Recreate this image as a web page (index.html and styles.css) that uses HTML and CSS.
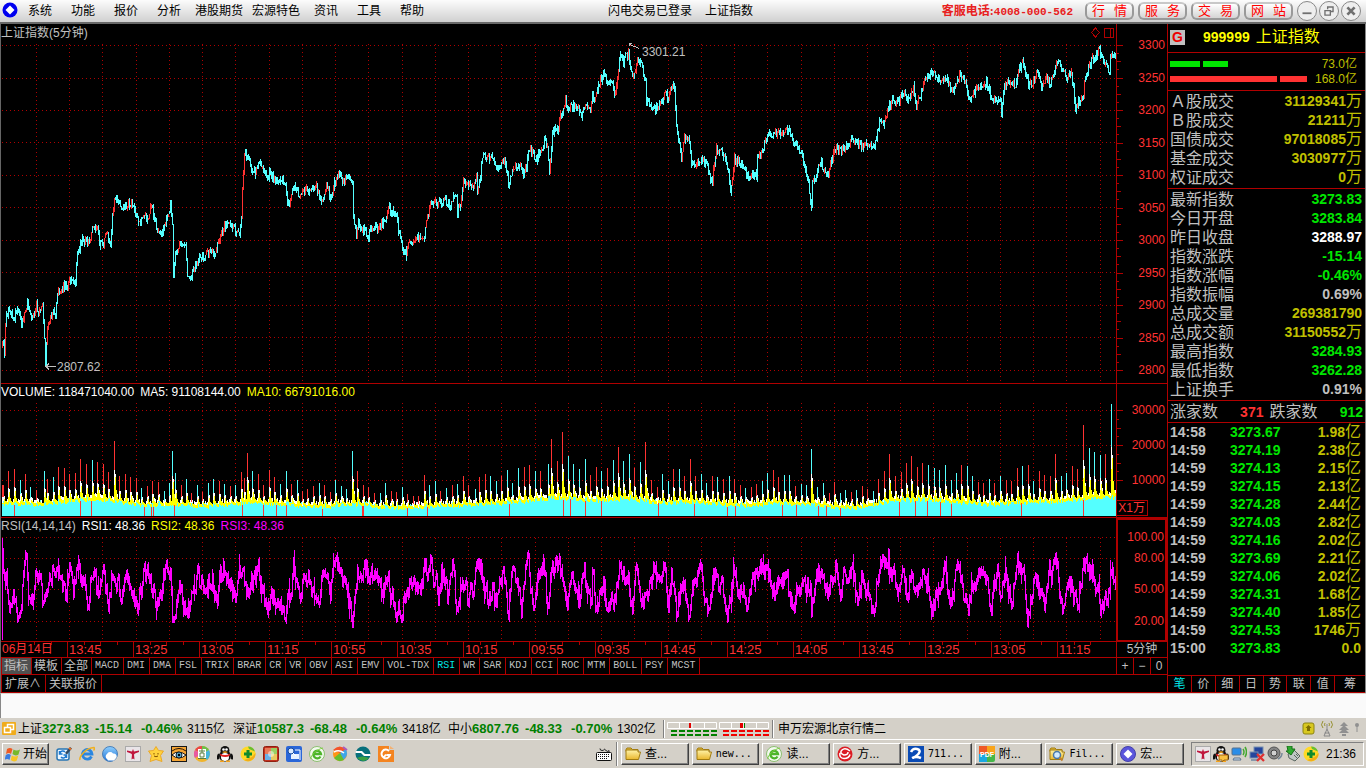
FILE: index.html
```html
<!DOCTYPE html>
<html lang="zh-CN">
<head>
<meta charset="utf-8">
<title>上证指数</title>
<link rel="stylesheet" href="styles.css">
</head>
<body>
<svg class="defs" aria-hidden="true">
  <defs>
    <linearGradient id="gBlue" x1="0" y1="0" x2="0" y2="1"><stop offset="0" stop-color="#8fd0ff"/><stop offset="1" stop-color="#1c6fd6"/></linearGradient>
    <linearGradient id="gGold" x1="0" y1="0" x2="0" y2="1"><stop offset="0" stop-color="#fff3a8"/><stop offset="1" stop-color="#e9b72e"/></linearGradient>
  </defs>
  <symbol id="i-folder" viewBox="0 0 16 16"><path d="M1 3.500l1-1.500h4l1.500 1.500H13v2H1z" fill="#e3b93a" stroke="#a27c10"/><path d="M1 13V4h12v2h2.500L13.500 13.500H1z" fill="url(#gGold)" stroke="#a27c10"/></symbol>
  <symbol id="i-search" viewBox="0 0 16 16"><use href="#i-folder"/><circle cx="8" cy="9" r="3.500" fill="#cfe9ff" stroke="#4878a8" stroke-width="1.500"/><path d="M10.500 11.500l3 3" stroke="#c08030" stroke-width="2"/></symbol>
  <symbol id="i-note" viewBox="0 0 16 16"><rect x="1" y="3" width="12" height="11" rx="2" fill="#eef7ff" stroke="#2876b4" stroke-width="1.500"/><path d="M4 7a3 3 0 0 1 5-1M10 10a3 3 0 0 1-5 1M3.500 5v3h3M10.500 12V9h-3" fill="none" stroke="#1c78d0" stroke-width="1.500"/><path d="M9 7l5-6 2 1.500-5 6z" fill="#304860"/><path d="M13 2l2 1.500" stroke="#f07020" stroke-width="2"/></symbol>
  <symbol id="i-ie" viewBox="0 0 16 16"><path d="M12.500 10.500A4.800 4.800 0 1 1 13 8H4" fill="none" stroke="#2a86e0" stroke-width="2.800"/><path d="M1 14C0 10 7 2 15 1.500c1 1 .5 2-.5 3" fill="none" stroke="#f0b020" stroke-width="1.500"/></symbol>
  <symbol id="i-ie-green" viewBox="0 0 16 16"><circle cx="8" cy="8" r="7.500" fill="#f3faee" stroke="#8cbf70"/><path d="M11.500 10.500A3.800 3.800 0 1 1 12 8H5" fill="none" stroke="#4db52a" stroke-width="2.300"/><path d="M2 13C1 10 8 3 14 2" fill="none" stroke="#79cc3c"/></symbol>
  <symbol id="i-qb" viewBox="0 0 16 16"><circle cx="8" cy="8" r="7.500" fill="url(#gBlue)" stroke="#4c80b8"/><path d="M5 13a3 3 0 0 1 0-5 3.500 3.500 0 0 1 6-.5 3 3 0 0 1 3.500 4l-2.500 3H6z" fill="#fff"/></symbol>
  <symbol id="i-swift" viewBox="0 0 16 16"><rect x=".5" y=".5" width="15" height="15" fill="#e9e5e8" stroke="#aaa"/><path d="M2 4.500l5 1 1-2.500 1 2.500 5-1v1.500l-4 1.500-1 1 .5 5-1.500-1-1.500 1 .5-5-1-1-4-1.500z" fill="#c0143c"/></symbol>
  <symbol id="i-star" viewBox="0 0 16 16"><path d="M8 .5l2.500 4 5 .5-3 4.500 1.500 6-6-2-6 2 1.500-6-3-4.500 5-.5z" fill="#ffd23c" stroke="#eaa82a" stroke-linejoin="round"/><path d="M6 7v1.500M10 7v1.500M6 10q2 1.500 4 0" stroke="#805000" fill="none"/></symbol>
  <symbol id="i-eye" viewBox="0 0 16 16"><rect x=".5" y=".5" width="15" height="15" fill="#f5a534" stroke="#181818"/><path d="M1 9q6-6 14 0-7 6-14 0z" fill="#fff" stroke="#111"/><circle cx="8" cy="9" r="3" fill="#58a8cc" stroke="#123"/><circle cx="8" cy="9" r="1.200"/><path d="M1 5q7-5 14 0" fill="none" stroke="#201000"/></symbol>
  <symbol id="i-book" viewBox="0 0 16 16"><circle cx="8" cy="8" r="8" fill="#f0b42c"/><path d="M8 8L1 4a8 8 0 0 1 7-4z" fill="#e94848"/><path d="M8 8V0a8 8 0 0 1 7 4z" fill="#6cc04a"/><path d="M8 8l7-4a8 8 0 0 1-2 10z" fill="#44b4dd"/><path d="M8 8L1 12a8 8 0 0 1 0-8z" fill="#e85aa0"/><rect x="4" y="3" width="8" height="10" fill="#fff"/><path d="M5 5h6M6 7h4v4H6zM8 3v4M4 12.500h8" stroke="#5a8040" fill="none"/></symbol>
  <symbol id="i-qq" viewBox="0 0 16 16"><path d="M2 8q-3 6 0 4M14 8q3 6 0 4" stroke="#111" stroke-width="2"/><ellipse cx="8" cy="10" rx="6" ry="5.500" fill="#111"/><ellipse cx="8" cy="4.500" rx="4.500" ry="4.500" fill="#111"/><ellipse cx="8" cy="11" rx="4" ry="4" fill="#fff"/><path d="M3 7.500q5 3 10 0l-.5 2.500q-4 2-9 0z" fill="#e32222"/><circle cx="6.500" cy="3.500" r="1.300" fill="#fff"/><circle cx="9.500" cy="3.500" r="1.300" fill="#fff"/><path d="M5 6q3-1.500 6 0-3 2-6 0zM3 14.500h4v1.500H3zM9 14.500h4v1.500H9z" fill="#f6a31a"/></symbol>
  <symbol id="i-qq-chat" viewBox="0 0 16 16"><use href="#i-qq"/><path d="M6 9h9v5h-4l-2 2v-2H6z" fill="#f8c040" stroke="#a06810"/></symbol>
  <symbol id="i-plus" viewBox="0 0 16 16"><circle cx="8" cy="8" r="7.500" fill="#ffd926"/><path d="M15.500 7A7.500 7.500 0 0 1 4 14l8-3z" fill="#f2ae18"/><path d="M8 .5a7.500 7.500 0 0 1 7 5L9 3z" fill="#68bf30"/><path d="M8 4v8M4 8h8" stroke="#108a2c" stroke-width="3"/></symbol>
  <symbol id="i-quad" viewBox="0 0 16 16"><rect x=".5" y=".5" width="15" height="15" rx="2" fill="#c33220" stroke="#902010"/><rect x="2" y="2" width="6" height="6" fill="#e87a5a"/><rect x="8" y="2" width="6" height="6" fill="#99d064"/><rect x="2" y="8" width="6" height="6" fill="#6ab0e8"/><rect x="8" y="8" width="6" height="6" fill="#e8cb60"/><circle cx="8" cy="8" r="3" fill="#fff" opacity=".5"/></symbol>
  <symbol id="i-doc" viewBox="0 0 16 16"><rect x="0" y="0" width="16" height="16" rx="2" fill="#2a66d8"/><rect x="5" y="8" width="8" height="5" fill="#e8f1ff"/><circle cx="5" cy="5" r="3" fill="#dceaff" stroke="#174a9c"/><path d="M7 7l3 3M9 4h5v10" stroke="#fff" fill="none"/></symbol>
  <symbol id="i-ball" viewBox="0 0 16 16"><circle cx="8" cy="8" r="7" fill="#ff9416"/><path d="M1 4Q8-3 14 4L8 7z" fill="#f3542c"/><path d="M14 3q3 7-3 11L8 7z" fill="#3fa5e8"/><path d="M2 12q4 5 10 2L8 7z" fill="#66bf2d"/><path d="M2 6q5-3 10 1" stroke="#fff" fill="none" stroke-width="1.500"/><path d="M11 1l4 3" stroke="#a85cc0" stroke-width="2"/></symbol>
  <symbol id="i-wave" viewBox="0 0 16 16"><circle cx="8" cy="8" r="7.500" fill="#08707c"/><path d="M1 5h6l3 3h5.500v2H9L6 7H.5z" fill="#fff"/><path d="M2 12q5-3 12 0-5 6-12 0z" fill="#3aa043"/></symbol>
  <symbol id="i-g" viewBox="0 0 16 16"><path d="M0 0h11v4h5v12H0z" fill="#f48420"/><path d="M12 0l4 3h-4z" fill="#f4b070"/><path d="M11 5a4.300 4.300 0 1 0 1 4H8.500M8 8.500L6 11" fill="none" stroke="#fff" stroke-width="2"/></symbol>
  <symbol id="i-swirl" viewBox="0 0 16 16"><circle cx="8" cy="8" r="7.500" fill="#dc1c24"/><path d="M13 5Q8 1 5 4t2 5q4 0 4-3M3 7q-1 5 4 5.500 5 0 6-4" fill="none" stroke="#fff" stroke-width="1.500"/></symbol>
  <symbol id="i-z" viewBox="0 0 16 16"><rect width="16" height="16" fill="#0a4bb5"/><path d="M3 6q2-4 6-3t2 4q-1 2-6 5M4 12q4-2 9 0" fill="none" stroke="#fff" stroke-width="2.500"/></symbol>
  <symbol id="i-hy" viewBox="0 0 16 16"><circle cx="8" cy="8" r="7.500" fill="#5a55dc" stroke="#4340a8"/><path d="M8 3.500L12.500 8 8 12.500 3.500 8z" fill="#fff"/></symbol>
  <symbol id="i-pc" viewBox="0 0 16 16"><rect x="1" y="2" width="9" height="7" rx="1" fill="#2a8de8" stroke="#58708c"/><path d="M3 12h6l1 2H2z" fill="#cfe0f0" stroke="#5d7490"/><path d="M12 3q2 3 0 6M14 1q3 5 0 10" fill="none" stroke="#44a830" stroke-width="1.500"/></symbol>
  <symbol id="i-net" viewBox="0 0 16 16"><rect x="5" y="1" width="9" height="7" fill="#25459c" stroke="#7890b0"/><rect x="1" y="6" width="8" height="6" fill="#25459c" stroke="#7890b0"/><path d="M2 14h7" stroke="#8698ac" stroke-width="2"/><path d="M8 8l7 7M15 8l-7 7" stroke="#e03030" stroke-width="2.300"/></symbol>
  <symbol id="i-vol" viewBox="0 0 16 16"><circle cx="7" cy="7" r="6" fill="#858585" stroke="#555"/><circle cx="7" cy="7" r="3" fill="#d0d0d0" stroke="#444"/><path d="M11 13q4-2 4-6" fill="none" stroke="#789" stroke-width="1.500"/></symbol>
  <symbol id="i-usb" viewBox="0 0 16 16"><path d="M3 8l6-4 6 6-5 5-6-3z" fill="#bfc6c4" stroke="#58655e"/><path d="M2 0h5v3h3L6 9 1 5h2z" fill="#30aa30" stroke="#187018"/><path d="M9 9l3 3M11 8l2 2" stroke="#5b665e"/></symbol>
  <symbol id="i-keyboard" viewBox="0 0 16 13"><path d="M4 .5q0 2 2 2t2-1 2 1 3 0V4" fill="none" stroke="#222"/><rect x=".5" y="4.500" width="15" height="8" rx="1" fill="#fff" stroke="#111"/><path d="M2 6.500h12M2 8.500h12M4 10.500h8" stroke="#111" stroke-dasharray="1 1"/></symbol>
  <symbol id="i-win" viewBox="0 0 16 16"><path d="M2 3q3-2 5.500 0L6 8Q4 6 1 8z" fill="#ef5a24"/><path d="M8.500 3.500q3 2 6.500 0l-1.500 5q-3 2-6-.5z" fill="#76b82a"/><path d="M.8 9q3-2 5 0l-1.300 5Q2 12-.5 14z" fill="#3a7ce0"/><path d="M6.800 9.500q3 2 6.500 0l-1.500 5q-3 2-6-.5z" fill="#f8c522"/></symbol>
</svg>

<header class="menubar">
  <div class="menu-left">
    <svg class="logo" viewBox="0 0 16 16" aria-hidden="true"><circle cx="8" cy="8" r="7.500" fill="#0000f0"/><path d="M8 3.500l4.500 4.500L8 12.500 3.500 8z" fill="#fff"/></svg>
    <nav class="menu"><button>系统</button><button>功能</button><button>报价</button><button>分析</button><button>港股期货</button><button>宏源特色</button><button>资讯</button><button>工具</button><button>帮助</button></nav>
  </div>
  <div class="login"><span>闪电交易已登录</span><span>上证指数</span></div>
  <div class="menu-right">
    <span class="hotline">客服电话:<span>4008-000-562</span></span>
    <button class="pill"><span>行</span><span>情</span></button><button class="pill"><span>服</span><span>务</span></button><button class="pill"><span>交</span><span>易</span></button><button class="pill"><span>网</span><span>站</span></button>
    <div class="winbtns">
      <button aria-label="最小化"><svg viewBox="0 0 20 20"><path d="M5 12.500h10" stroke-width="2"/></svg></button>
      <button aria-label="还原"><svg viewBox="0 0 20 20"><path d="M8.500 8V5.500h6v5H12M5.500 9.500h6v5h-6z" stroke-width="1.500"/></svg></button>
      <button aria-label="关闭"><svg viewBox="0 0 20 20"><path d="M6 6l8 8M14 6l-8 8" stroke-width="3"/></svg></button>
    </div>
  </div>
</header>

<main class="workspace">
  <section class="charts">
    <div class="panel price">
      <div class="plot">
        <svg id="price" viewBox="1 24 1115 359" preserveAspectRatio="none"></svg>
        <div class="legend"><span class="c-gray">上证指数(5分钟)</span></div>
      </div>
      <ul class="axis axis-price"><li>3300</li><li>3250</li><li>3200</li><li>3150</li><li>3100</li><li>3050</li><li>3000</li><li>2950</li><li>2900</li><li>2850</li><li>2800</li></ul>
    </div>
    <div class="panel volume">
      <div class="plot">
        <svg id="volume" viewBox="1 384 1115 133" preserveAspectRatio="none"></svg>
        <div class="legend"><span class="c-white">VOLUME: 118471040.00</span><span class="c-white">MA5: 91108144.00</span><span class="c-bright">MA10: 66791016.00</span></div>
      </div>
      <ul class="axis axis-volume"><li>30000</li><li>20000</li><li>10000</li><li class="unit">X1万</li></ul>
    </div>
    <div class="panel rsi">
      <div class="plot">
        <svg id="rsi" viewBox="1 518 1115 123" preserveAspectRatio="none"></svg>
        <div class="legend"><span class="c-gray">RSI(14,14,14)</span><span class="c-white">RSI1: 48.36</span><span class="c-bright">RSI2: 48.36</span><span class="c-magenta">RSI3: 48.36</span></div>
      </div>
      <ul class="axis axis-rsi"><li>100.00</li><li>80.00</li><li>50.00</li><li>20.00</li></ul>
    </div>
    <div class="timeline">
      <ol class="times"><li>06月14日</li><li>13:45</li><li>13:25</li><li>13:05</li><li>11:15</li><li>10:55</li><li>10:35</li><li>10:15</li><li>09:55</li><li>09:35</li><li>14:45</li><li>14:25</li><li>14:05</li><li>13:45</li><li>13:25</li><li>13:05</li><li>11:15</li></ol>
      <span class="period">5分钟</span>
    </div>
    <div class="tabrow">
      <div class="tabs"><button class="cjk active">指标</button><button class="cjk">模板</button><button class="cjk">全部</button><button>MACD</button><button>DMI</button><button>DMA</button><button>FSL</button><button>TRIX</button><button>BRAR</button><button>CR</button><button>VR</button><button>OBV</button><button>ASI</button><button>EMV</button><button>VOL-TDX</button><button class="chosen">RSI</button><button>WR</button><button>SAR</button><button>KDJ</button><button>CCI</button><button>ROC</button><button>MTM</button><button>BOLL</button><button>PSY</button><button>MCST</button></div>
      <div class="zoomers"><button>+</button><button>−</button><button>0</button></div>
    </div>
    <div class="tabrow"><div class="tabs ext"><button>扩展∧</button><button>关联报价</button></div></div>
  </section>

  <aside class="quote">
    <div class="title"><b class="gbox">G</b><b class="code">999999</b><span>上证指数</span></div>
    <div class="flows">
      <div class="flow up"><i></i><i></i><span>73.0亿</span></div>
      <div class="flow down"><i></i><i></i><span>168.0亿</span></div>
    </div>
    <dl class="facts">
      <div><dt>Ａ股成交</dt><dd class="c-yellow">31129341<span>万</span></dd></div>
      <div><dt>Ｂ股成交</dt><dd class="c-yellow">21211<span>万</span></dd></div>
      <div><dt>国债成交</dt><dd class="c-yellow">97018085<span>万</span></dd></div>
      <div><dt>基金成交</dt><dd class="c-yellow">3030977<span>万</span></dd></div>
      <div><dt>权证成交</dt><dd class="c-yellow">0<span>万</span></dd></div>
    </dl>
    <dl class="facts">
      <div><dt>最新指数</dt><dd class="c-green">3273.83</dd></div>
      <div><dt>今日开盘</dt><dd class="c-green">3283.84</dd></div>
      <div><dt>昨日收盘</dt><dd class="c-white">3288.97</dd></div>
      <div><dt>指数涨跌</dt><dd class="c-green">-15.14</dd></div>
      <div><dt>指数涨幅</dt><dd class="c-green">-0.46%</dd></div>
      <div><dt>指数振幅</dt><dd class="c-gray">0.69%</dd></div>
      <div><dt>总成交量</dt><dd class="c-yellow">269381790</dd></div>
      <div><dt>总成交额</dt><dd class="c-yellow">31150552<span>万</span></dd></div>
      <div><dt>最高指数</dt><dd class="c-green">3284.93</dd></div>
      <div><dt>最低指数</dt><dd class="c-green">3262.28</dd></div>
      <div><dt>上证换手</dt><dd class="c-gray">0.91%</dd></div>
    </dl>
    <div class="breadth"><span>涨家数</span><b class="c-red">371</b><span>跌家数</span><b class="c-green">912</b></div>
    <table class="ticks">
      <tbody>
        <tr><td>14:58</td><td>3273.67</td><td>1.98<span>亿</span></td></tr>
        <tr><td>14:59</td><td>3274.19</td><td>2.38<span>亿</span></td></tr>
        <tr><td>14:59</td><td>3274.13</td><td>2.15<span>亿</span></td></tr>
        <tr><td>14:59</td><td>3274.15</td><td>2.13<span>亿</span></td></tr>
        <tr><td>14:59</td><td>3274.28</td><td>2.44<span>亿</span></td></tr>
        <tr><td>14:59</td><td>3274.03</td><td>2.82<span>亿</span></td></tr>
        <tr><td>14:59</td><td>3274.16</td><td>2.02<span>亿</span></td></tr>
        <tr><td>14:59</td><td>3273.69</td><td>2.21<span>亿</span></td></tr>
        <tr><td>14:59</td><td>3274.06</td><td>2.02<span>亿</span></td></tr>
        <tr><td>14:59</td><td>3274.31</td><td>1.68<span>亿</span></td></tr>
        <tr><td>14:59</td><td>3274.40</td><td>1.85<span>亿</span></td></tr>
        <tr><td>14:59</td><td>3274.53</td><td>1746<span>万</span></td></tr>
        <tr><td>15:00</td><td>3273.83</td><td>0.0</td></tr>
      </tbody>
    </table>
    <div class="side-tabs"><button class="chosen">笔</button><button>价</button><button>细</button><button>日</button><button>势</button><button>联</button><button>值</button><button>筹</button></div>
  </aside>
</main>

<div class="blank"></div>

<footer class="status">
  <svg class="stack" viewBox="0 0 14 13" aria-hidden="true"><rect width="14" height="13" rx="1" fill="#f0ac1c"/><path d="M5.500 5V2.500h6v5H9M2.500 5.500h6v5h-6z" fill="none" stroke="#fff" stroke-width="1.500"/></svg>
  <div class="idx"><span>上证</span><b class="last">3273.83</b><b>-15.14</b><b>-0.46%</b><span class="amt">3115亿</span></div>
  <div class="idx"><span>深证</span><b class="last">10587.3</b><b>-68.48</b><b>-0.64%</b><span class="amt">3418亿</span></div>
  <div class="idx"><span>中小</span><b class="last">6807.76</b><b>-48.33</b><b>-0.70%</b><span class="amt">1302亿</span></div>
  <i class="sep"></i>
  <svg class="meter" viewBox="0 0 103 14" aria-hidden="true">
    <path d="M.5.500h49v6H.5zM12.500 1v5M25 1v5M37.500 1v5M52.500.500h49v6h-49zM64.500 1v5M77 1v5M89.500 1v5" fill="none" stroke="#fff"/>
    <path d="M22 1h2v5h-2zM73 1h3v5h-3z" fill="#e00000"/><path d="M77 1h1v5h-1z" fill="#008000"/>
    <path d="M4 9h47M4 13h47" stroke="#008000" stroke-width="2" stroke-dasharray="6 2"/><path d="M56 9h47M56 13h47" stroke="#f00000" stroke-width="2" stroke-dasharray="6 2"/>
  </svg>
  <i class="sep"></i>
  <span class="server">申万宏源北京行情二</span>
  <svg class="signals" viewBox="0 0 58 18" aria-hidden="true">
    <rect x="1" y="3" width="11" height="11" rx="2" fill="#d8c820" stroke="#8c8410"/><path d="M6.500 5l3 3H8v3H5V8H3.500z" fill="#7c6c00"/>
    <path d="M21 1q-3 4 0 7M29 1q3 4 0 7M23 3q-1 2 0 3M27 3q1 2 0 3" fill="none" stroke="#969030"/><path d="M25 4v5l-3 7h6l-3-7M22.500 13h5" fill="none" stroke="#888"/>
    <path d="M42 2l4 4h-3l4 4h-3l3 3h-10l3-3h-3l4-4h-3zM40 14h4v2h-4z" fill="#909090"/><circle cx="55" cy="5" r="2" fill="#909090"/><path d="M55 6v6" stroke="#909090"/>
  </svg>
</footer>

<div class="taskbar">
  <button class="start"><svg><use href="#i-win"/></svg>开始</button>
  <div class="launch">
    <svg><use href="#i-note"/></svg><svg><use href="#i-ie"/></svg><svg><use href="#i-qb"/></svg><svg><use href="#i-swift"/></svg><svg><use href="#i-star"/></svg><svg><use href="#i-eye"/></svg><svg><use href="#i-book"/></svg><svg><use href="#i-qq"/></svg><svg><use href="#i-plus"/></svg><svg><use href="#i-quad"/></svg><svg><use href="#i-doc"/></svg><svg><use href="#i-ie-green"/></svg><svg><use href="#i-ball"/></svg><svg><use href="#i-wave"/></svg><svg><use href="#i-g"/></svg>
  </div>
  <svg class="keyboard"><use href="#i-keyboard"/></svg>
  <i class="sep light"></i>
  <div class="tasks">
    <button><svg><use href="#i-folder"/></svg>查...</button><button><svg><use href="#i-folder"/></svg><span class="mono">new...</span></button><button><svg><use href="#i-ie-green"/></svg>读...</button><button><svg><use href="#i-swirl"/></svg>方...</button><button><svg><use href="#i-z"/></svg><span class="mono">711...</span></button><button><svg viewBox="0 0 16 16"><rect width="16" height="16" rx="2" fill="#46b749"/><path d="M0 0h8v8H0z" fill="#ef5a28"/><path d="M8 0h8v8H8z" fill="#f9a51a"/><path d="M0 8h8v8H0z" fill="#1ba8e0"/><text class="pdf" x="8" y="11">PDF</text></svg>附...</button><button><svg><use href="#i-search"/></svg><span class="mono">Fil...</span></button><button><svg><use href="#i-hy"/></svg>宏...</button>
  </div>
  <div class="tray"><svg><use href="#i-swift"/></svg><svg><use href="#i-qq-chat"/></svg><svg><use href="#i-pc"/></svg><svg><use href="#i-net"/></svg><svg><use href="#i-vol"/></svg><svg><use href="#i-usb"/></svg><svg><use href="#i-plus"/></svg><time>21:36</time></div>
</div>
<script src="charts.js"></script>
</body>
</html>
```
FILE: styles.css
```css
:root {
  --line: #b00000;
  --red: #ff3232;
  --gray: #c0c0c0;
  --face: #d4d0c8;
  --sans: "Liberation Sans", "Noto Sans CJK SC", sans-serif;
}

* { box-sizing: border-box; }
body {
  margin: 0;
  min-height: 100vh;
  display: flex;
  flex-direction: column;
  background: #000;
  font: 12px/16px var(--sans);
  color: var(--gray);
}
button { font: inherit; color: inherit; background: none; border: 0; margin: 0; padding: 0; cursor: pointer; white-space: nowrap; }
ul, ol, dl, dd { margin: 0; padding: 0; list-style: none; }
.defs { position: absolute; width: 0; height: 0; }

.c-gray { color: #c0c0c0; }
.c-white { color: #fff; }
.c-bright { color: #ff0; }
.c-yellow { color: #c0c000; }
.c-green { color: #00e600; }
.c-red { color: #ff3232; }
.c-magenta { color: #f0f; }

/* menu bar */
.menubar {
  display: grid;
  grid-template-columns: 1fr auto 1fr;
  align-items: center;
  height: 24px;
  padding-right: 5px;
  color: #000;
  background: linear-gradient(#fcfcfc, #d0d0d0);
  border-bottom: 2px solid #686868;
}
.menu-left, .menu, .login, .menu-right, .winbtns { display: flex; align-items: center; }
.logo { width: 16px; height: 16px; margin: 0 1px 2px 2px; }
.menu button { min-width: 43px; padding: 0 5px 0 4px; }
.login { gap: 13px; }
.menu-right { justify-content: flex-end; gap: 4px; }
.hotline { margin-right: 8px; color: #e82020; font: bold 12px/16px "Liberation Serif", "Noto Sans CJK SC", serif; }
.hotline span { font: bold 11px/16px "Liberation Mono", monospace; }
.pill {
  display: flex;
  justify-content: space-between;
  width: 49px;
  height: 18px;
  padding: 0 5px;
  font-size: 13px;
  line-height: 14px;
  color: #f00;
  border: 2px solid #999;
  border-top-color: #c8c8c8;
  border-radius: 6px;
  background: linear-gradient(#fff, #d4d4d4);
}
.winbtns { gap: 2px; }
.winbtns button { width: 20px; height: 20px; border: 1px solid #888; border-radius: 10px; background: #eee; }
.winbtns svg { display: block; width: 18px; height: 18px; fill: none; stroke: #707070; }

/* workspace */
.workspace {
  flex: 1;
  display: grid;
  grid-template-columns: minmax(0, 1fr) 199px;
  border-left: 1px solid #666;
  background: #000;
}
.charts {
  display: grid;
  grid-template-rows: 360fr 134fr 124fr 16px 17px 18px;
}
.panel, .timeline { display: grid; grid-template-columns: minmax(0, 1fr) 51px; min-height: 0; border-bottom: 1px solid var(--line); }
.plot { display: grid; min-height: 0; min-width: 0; }
.plot > * { grid-area: 1 / 1; }
.plot svg { width: 100%; height: 100%; min-height: 0; overflow: visible; shape-rendering: crispEdges; }
.legend { display: flex; align-items: flex-start; gap: 6px; white-space: nowrap; }
.price .legend { padding-top: 1px; }
.axis { border-left: 1px solid var(--line); color: var(--red); text-align: right; }
.axis li { padding-right: 2px; line-height: 16px; }
.axis-price { display: flex; flex-direction: column; justify-content: space-between; padding: 13px 0 5px; }
.axis-volume { padding-top: 9px; }
.axis-volume li { line-height: 35px; }
.axis-volume .unit { width: 31px; margin-top: 2px; border: 1px solid var(--line); border-left: 0; line-height: 14px; }
.axis-rsi { display: flex; flex-direction: column; padding-top: 9px; border: 2px solid var(--line); border-bottom-width: 1px; }
.axis-rsi li { padding-right: 1px; }
.axis-rsi li:nth-child(2) { margin-top: 5px; }
.axis-rsi li:nth-child(3) { margin-top: 15px; }
.axis-rsi li:nth-child(4) { margin-top: 16px; }

.times { display: grid; grid-template-columns: 66fr repeat(15, minmax(0, 66fr)) minmax(0, 59fr); color: var(--red); line-height: 15px; font-size: 13px; }
.times li { padding-left: 1px; border-left: 1px solid var(--line); white-space: nowrap; }
.times li:first-child { border-left: 0; font-size: 12px; }
.period { border-left: 1px solid var(--line); text-align: center; line-height: 15px; }

.tabrow { display: flex; justify-content: space-between; border-bottom: 1px solid var(--line); }
.tabs, .zoomers { display: flex; }
.tabs { border-left: 1px solid var(--line); }
.tabs button { padding: 0 4px 0 3px; border-right: 1px solid var(--line); font: 10px/16px "Liberation Mono", monospace; }
.tabs .cjk { padding: 0 3px 0 2px; font: 12px/16px var(--sans); }
.ext button { font: 12px/16px var(--sans); }
.tabs .active { background: #505050; }
.tabs .chosen, .side-tabs .chosen { color: #00e6e6; }
.zoomers { width: 51px; border-left: 1px solid var(--line); }
.zoomers button { flex: 1; border-right: 1px solid var(--line); }
.zoomers button:last-child { border-right: 0; }

/* quote column */
.quote { display: flex; flex-direction: column; border-left: 1px solid var(--line); border-right: 1px solid #888; }
.title { display: flex; align-items: center; height: 29px; padding: 0 2px 2px; border-bottom: 1px solid var(--line); color: #ff0; font-size: 16px; }
.gbox { width: 15px; height: 15px; background: #c0c0c0; color: #e00; font: bold 14px/15px "Liberation Sans", sans-serif; text-align: center; }
.code { margin: 0 6px 0 18px; font-size: 14px; }
.flows { height: 38px; padding: 3px 8px 0 2px; border-bottom: 1px solid var(--line); color: #c0c000; }
.flow { display: flex; align-items: center; gap: 3px; height: 15px; }
.flow span { margin-left: auto; }
.flow i { height: 6px; background: #00e600; }
.up i:first-child { width: 30px; }
.up i + i { width: 25px; }
.down i { background: #ff3232; }
.down i:first-child { width: 107px; }
.down i + i { width: 27px; }
.facts { padding: 1px 3px 1px 2px; border-bottom: 1px solid var(--line); font-size: 16px; }
.facts div { display: flex; justify-content: space-between; height: 19px; line-height: 19px; }
.facts dd, .ticks { font-size: 14px; font-weight: bold; }
.facts dd span, .ticks span { font-size: 16px; font-weight: normal; line-height: 16px; }
.breadth { display: flex; justify-content: space-between; height: 22px; padding: 0 2px; border-bottom: 1px solid var(--line); font-size: 16px; line-height: 22px; }
.breadth b { font-size: 14px; }
.breadth .c-red { margin-left: 16px; }
.breadth .c-green { margin-left: 16px; }
.ticks { width: 100%; border-collapse: collapse; table-layout: fixed; }
.ticks td { height: 18px; padding: 0 2px; line-height: 18px; }
.ticks td:nth-child(1) { width: 58px; }
.ticks td:nth-child(2) { width: 64px; color: #00e600; padding-left: 4px; }
.ticks td:nth-child(3) { color: #c0c000; text-align: right; padding-right: 4px; }
.side-tabs { display: grid; grid-template-columns: repeat(7, 24fr) 30fr; height: 18px; margin-top: auto; border: solid var(--line); border-width: 1px 0; }
.side-tabs button { border-right: 1px solid var(--line); }
.side-tabs button:last-child { border-right: 0; }

/* lower bars */
.blank { height: 25px; background: #fafafa; border-top: 1px solid #d8d4cc; border-left: 1px solid #888; }
.status { display: flex; align-items: center; height: 21px; padding: 0 6px 0 2px; background: var(--face); color: #000; white-space: nowrap; }
.stack { width: 14px; height: 13px; margin-right: 2px; }
.idx { display: flex; }
.idx b { width: 46px; color: #008000; font: bold 13px/16px "Liberation Sans", sans-serif; }
.idx .last { width: 53px; }
.idx .amt { width: 46px; }
.sep { width: 2px; height: 18px; border-left: 1px solid #808080; border-right: 1px solid #fff; }
.meter { width: 103px; height: 14px; margin: 0 2px; }
.server { margin-left: 4px; }
.signals { width: 58px; height: 18px; margin-left: auto; }

.taskbar { display: flex; align-items: center; height: 29px; padding: 0 2px; background: var(--face); border-top: 1px solid #fff; color: #000; }
.taskbar svg { flex: none; width: 16px; height: 16px; }
.start, .tasks button {
  display: flex;
  align-items: center;
  height: 22px;
  border: 1px solid;
  border-color: #fff #404040 #404040 #fff;
  box-shadow: inset -1px -1px #808080;
  background: var(--face);
}
.start { width: 47px; padding-left: 2px; gap: 2px; }
.launch { display: flex; gap: 7px; margin-left: 7px; }
.taskbar .keyboard { height: 13px; margin: 0 4px 0 auto; }
.light { height: 24px; margin-right: 3px; }
.tasks { display: flex; gap: 3px; flex: 0 1 563px; }
.tasks button { flex: 1; gap: 4px; padding-left: 3px; }
.mono { font: 10px/16px "DejaVu Sans Mono", monospace; }
.pdf { font: bold 7px "Liberation Sans", sans-serif; fill: #fff; text-anchor: middle; }
.tray { display: flex; align-items: center; gap: 2px; height: 24px; margin-left: 7px; padding: 0 7px 0 3px; border: 1px solid; border-color: #808080 #fff #fff #808080; }
.tray time { margin-left: 5px; }
```
FILE: charts.js
```js
const CYAN = '#54ffff', RED = '#ff3232', LINE = '#b00000';

function random(seed) {
  return () => {
    seed = (seed * 1664525 + 1013904223) >>> 0;
    return seed / 4294967296;
  };
}

function pairs(text) {
  return text.trim().split(/\s+/).map(p => p.split(',').map(Number));
}

function at(points, x) {
  let i = 1;
  while (i < points.length - 1 && points[i][0] < x) i++;
  const [x0, y0] = points[i - 1], [x1, y1] = points[i];
  const t = Math.max(0, Math.min(1, (x - x0) / (x1 - x0)));
  return y0 + (y1 - y0) * t;
}

const bar = (x, top, bottom) =>
  `M${x} ${Math.round(top)}h1V${Math.max(Math.round(bottom), Math.round(top) + 1)}h-1z`;
const fill = (d, color) => `<path d="${d}" fill="${color}"/>`;

function grid(top, bottom, levels) {
  let d = '';
  for (const y of levels) for (let x = 2; x < 1116; x += 4) d += bar(x, y, y + 1);
  for (let k = 0; k < 33; k++) {
    const x = Math.round(36 + k * 33.24);
    for (let y = top; y < bottom; y += 4) d += bar(x, y, y + 1);
  }
  return fill(d, LINE);
}

function ticks(first, last, step) {
  let d = '', n = 0;
  for (let y = first; y <= last; y += step, n++) {
    const w = n % 4 === 0 ? 6 : n % 2 === 0 ? 4 : 2;
    d += `M1117 ${Math.round(y)}h${w}v1h-${w}z`;
  }
  return fill(d, LINE);
}

/* index price */
const price = pairs(`3,347 4,358 5,325 6,312 10,315 14,320 16,309 21,323 25,313 27,300 31,319 36,305 39,313 42,308
44,340 45,363 47,333 50,317 55,312 58,293 62,287 68,285 71,279 75,284 77,253 82,240 87,243 92,231 97,230 99,243
103,243 106,230 108,238 110,245 112,220 114,200 117,199 123,211 127,203 134,207 137,220 141,219 147,218 151,208
155,224 158,232 163,231 165,220 168,216 170,204 172,220 173,272 175,252 178,248 181,243 185,248 187,273 189,279
193,269 196,268 199,255 204,258 208,253 212,251 214,258 218,243 223,228 227,222 231,223 236,235 239,232 241,213
242,190 244,155 247,156 250,166 255,173 260,163 263,173 267,178 269,171 273,178 280,182 284,182 287,200 289,206
292,192 294,186 298,196 302,195 306,190 309,195 312,186 317,189 320,199 323,203 326,188 331,199 334,183 338,174
343,180 347,178 349,176 352,184 353,217 354,226 356,235 358,225 362,231 365,231 368,237 370,227 380,226 385,221
388,208 392,213 396,215 398,232 401,238 402,250 406,254 408,243 413,245 415,237 420,240 424,236 427,217 431,203
439,203 445,200 449,207 453,197 456,197 457,214 460,204 463,182 470,187 474,185 476,176 477,190 480,176 482,155
487,157 492,158 496,166 500,170 503,160 506,168 508,183 513,170 518,163 523,172 526,168 528,151 532,153 536,160
540,152 544,142 547,147 549,172 551,152 552,133 558,128 561,112 565,102 567,108 573,107 579,110 581,115 586,105
590,112 592,98 595,102 598,83 603,73 607,83 611,78 614,97 617,80 619,57 623,62 627,55 628,48 630,67 633,78
637,63 641,65 645,82 646,102 652,106 658,110 664,95 668,98 672,83 674,92 676,127 680,152 681,157 684,138 688,135
691,162 695,167 698,160 706,162 709,175 712,182 714,163 716,150 722,152 728,168 730,192 732,180 734,160 739,162
747,177 756,175 757,157 762,152 767,135 774,133 781,133 789,130 794,145 799,148 805,167 809,190 811,207 812,180
815,180 818,165 821,163 824,172 828,173 831,162 836,148 840,152 846,147 852,138 856,140 861,147 868,142 874,148
877,133 879,122 883,123 887,112 892,100 899,100 904,90 907,102 913,88 916,105 921,92 924,78 933,73 942,83 946,78
951,90 956,87 959,75 966,82 968,100 976,90 986,83 990,97 1000,102 1001,112 1003,92 1008,82 1015,85 1018,68
1023,63 1028,83 1032,85 1037,73 1042,87 1046,75 1049,88 1053,77 1056,60 1062,68 1066,78 1071,73 1075,107 1080,98
1083,100 1084,83 1087,72 1092,58 1099,52 1102,60 1106,62 1109,78 1110,57 1116,58`);

function drawPrice() {
  const rnd = random(7);
  let cyan = '', red = '', prev = at(price, 2);
  for (let x = 2; x < 1116; x++) {
    const cur = at(price, x) + (rnd() - 0.5) * 8;
    const top = Math.min(prev, cur) - rnd() * 4, bottom = Math.max(prev, cur) + rnd() * 4;
    if (cur < prev && rnd() > 0.5) red += bar(x, top, bottom - 1);
    else cyan += bar(x, top, bottom);
    prev = cur;
  }
  document.getElementById('price').innerHTML =
    grid(44, 382, [45, 78, 110, 142, 175, 207, 240, 272, 305, 337, 370]) + ticks(45, 371, 8.125) +
    fill(cyan, CYAN) + fill(red, RED) +
    `<path d="M45.500 366.500h10M49 363.500l-3 3 3 3M629 43.500h3M629.500 43v3M630 44.500l9 4" fill="none" stroke="#c0c0c0"/>
     <path d="M1095.500 28l4 4.500-4 4.500-4-4.500zM1104.500 28.500h9v9h-9zM1110.500 28v9" fill="none" stroke="${LINE}"/>
     <text x="57" y="371" fill="#c0c0c0">2807.62</text><text x="642" y="56" fill="#c0c0c0">3301.21</text>`;
}

/* turnover: opening spikes, negative where the bar closed lower */
const spikes = pairs(`3,31 8,45 14,47 20,-36 25,42 30,-29 36,26 44,-45 47,37 53,-39 58,49 64,48 69,42 75,43 80,57 86,52
92,-56 97,54 103,52 108,44 114,75 119,40 125,42 130,39 136,38 141,-28 147,30 152,35 158,34 164,-25 169,-33 172,-65
175,-43 181,31 186,-37 191,23 197,-31 202,24 208,-33 213,-37 219,35 224,-32 230,30 235,-31 241,44 244,38 247,63
252,-45 258,42 263,31 269,46 274,39 280,-32 286,-45 291,32 297,-36 302,25 307,27 313,30 319,-33 324,31 330,24
335,-36 341,-30 346,-27 352,-65 357,45 363,31 368,29 374,23 380,-23 385,-33 391,25 396,24 402,-29 407,22 413,20
418,20 424,41 429,-31 435,-35 440,25 446,-28 452,31 457,-32 463,40 468,31 475,-27 479,39 485,42 490,-40 496,-35
501,40 507,-46 512,-33 518,-48 524,49 529,51 535,-45 540,45 548,-52 551,77 557,55 562,84 568,-60 573,-52 579,-47
585,-57 590,41 596,49 601,-45 607,48 613,-56 618,69 623,-55 629,-62 634,48 640,-54 645,74 651,36 657,29 662,-42
668,-35 673,47 679,-47 684,40 690,57 695,40 701,-42 706,-33 712,40 717,-39 723,37 729,-40 734,37 740,31 745,-28
751,29 756,32 762,-35 767,-43 773,46 778,39 784,-41 789,-41 795,30 801,-32 806,-31 811,-67 817,-29 823,-33
829,23 834,34 840,-23 845,-26 851,24 856,-26 862,30 867,27 873,-25 878,37 884,45 889,62 895,40 901,44 906,53
911,60 917,49 922,53 928,-51 934,-48 939,-46 945,-51 951,-36 956,-43 961,51 967,-50 972,-40 978,34 983,33 989,-37
994,33 1000,-40 1006,36 1011,35 1017,48 1022,-50 1028,51 1033,-35 1039,45 1044,41 1050,40 1055,62 1061,-40
1066,-43 1072,50 1077,47 1083,91 1089,-68 1094,-64 1100,-61 1105,62 1111,-112`);

function drawVolume() {
  const rnd = random(19), base = 516;
  let cyan = '', red = '', white = '', yellow = '', deep = '';
  for (let x = 2; x < 1116; x++) {
    let sum = 0, n = 0, last = spikes[0];
    for (const s of spikes) {
      if (Math.abs(s[0] - x) < 20) { sum += Math.min(60, Math.abs(s[1])); n++; }
      if (s[0] <= x) last = s;
    }
    const low = sum / n * 0.3, peak = Math.abs(last[1]), d = Math.max(0, x - last[0]);
    const level = low + (rnd() - 0.3) * 6;
    cyan += bar(x, base - level, base);
    if (d === 0) {
      const b = bar(x, base - peak, base);
      if (last[1] < 0) cyan += b; else red += b;
      white += bar(x, base - peak * 0.62, base - level);
      yellow += bar(x, base - peak * 0.42, base - level);
    } else {
      const ma = low + Math.max(1, peak * 0.5 - low) * Math.exp(-(d - 1) * 0.9) + 1;
      yellow += bar(x, base - ma - 1, base - Math.min(level, ma - 2));
      if (d === 1 || d === 5 || rnd() > 0.72) white += bar(x, base - ma - 4, base - ma + 1);
    }
    if (rnd() > 0.965) deep += bar(x, base - low, base);
  }
  document.getElementById('volume').innerHTML =
    grid(403, 515, [410, 445, 480]) + ticks(410, 480, 8.75) +
    fill(red, RED) + fill(cyan, CYAN) + fill(deep, RED) + fill(white, '#fff') + fill(yellow, '#ff0');
}

const rsi = pairs(`2,537 3,640 5,555 9,600 12,585 18,610 26,560 30,618 37,567 44,623 52,567 58,561 65,600 71,568 73,606
77,553 83,573 88,606 90,565 97,608 104,565 108,613 114,556 121,598 125,580 138,615 143,575 150,565 155,610 165,562
170,560 172,628 181,575 186,626 198,567 204,605 212,568 214,610 223,558 230,595 236,608 242,548 249,600 258,568
265,608 275,607 286,625 293,564 298,612 305,565 310,570 318,615 325,568 330,610 334,556 342,590 352,632 358,570
370,570 380,600 386,558 390,590 397,625 400,620 405,600 407,563 412,595 414,566 419,595 425,555 430,553 439,600
441,573 448,607 452,565 456,628 462,556 468,608 475,563 482,552 487,600 497,608 502,562 507,620 513,565 517,565
521,612 527,555 534,605 543,557 547,622 552,568 560,562 567,606 572,585 580,610 584,566 591,616 592,561 595,605
602,567 607,608 613,616 618,552 626,570 632,608 636,570 647,620 653,575 663,560 668,605 671,565 676,622 684,567
690,625 694,568 700,575 708,612 713,563 717,570 725,610 730,622 733,562 742,600 746,605 756,561 765,557 775,600
781,566 792,618 800,617 810,580 811,615 818,570 827,608 835,556 838,597 844,568 851,556 858,615 863,575 873,615
879,548 885,565 892,568 897,600 902,562 906,612 910,568 915,608 923,558 930,595 938,612 944,570 949,618 957,558
967,626 975,568 983,570 990,618 997,575 1000,618 1005,560 1011,608 1017,555 1022,560 1027,625 1034,563 1044,618
1047,565 1055,556 1063,613 1070,565 1073,620 1084,558 1090,560 1096,575 1100,612 1107,615 1110,563 1115,595`);

function drawRsi() {
  const rnd = random(41);
  let d = bar(2, 538, 640), prev = 560, drift = 0;
  for (let x = 3; x < 1116; x++) {
    const y = x < 6 ? 560 + x * 3 : at(rsi, x);
    drift = drift * 0.6 + (rnd() - 0.5) * 22;
    const cur = 587 + (y - 587) * 0.62 + drift;
    const reach = rnd() > 0.9 ? 12 : 4;
    d += bar(x, Math.max(544, Math.min(prev, cur) - rnd() * reach - 1), Math.min(634, Math.max(prev, cur) + rnd() * reach + 1));
    prev = cur;
  }
  let t = '';
  for (let k = 0; k < 67; k++) if (k % 4) t += bar(Math.round(67 + (k - 4) * 16.5), 642, 645);
  document.getElementById('rsi').innerHTML =
    grid(538, 640, [537, 558, 589, 621]) + fill(d, '#f0f') + fill(t, LINE);
}

drawPrice();
drawVolume();
drawRsi();
```
